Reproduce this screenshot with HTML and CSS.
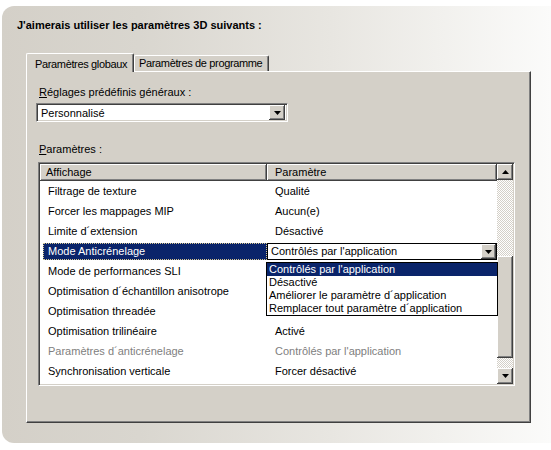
FILE: index.html
```html
<!DOCTYPE html>
<html lang="fr">
<head>
    <meta charset="UTF-8">
    <meta name="viewport" content="width=device-width, initial-scale=1.0">
    <title>Paramètres 3D</title>
    <link rel="stylesheet" href="styles.css">
</head>
<body>
    <div class="frame">
        <h1 class="title">J'aimerais utiliser les paramètres 3D suivants :</h1>

        <div class="tabs">
            <div class="tab-row">
                <div class="tab active">Paramètres globaux</div>
                <div class="tab">Paramètres de programme</div>
            </div>

            <div class="tab-panel">
                <div class="field-label preset-label"><u>R</u>églages prédéfinis généraux :</div>
                <div class="select preset">
                    <span class="select-text">Personnalisé</span>
                    <span class="btn drop-btn">
                        <svg width="7" height="4" viewBox="0 0 7 4"><polygon points="0,0 7,0 3.5,4" fill="#000"/></svg>
                    </span>
                </div>

                <div class="field-label list-label"><u>P</u>aramètres :</div>
                <div class="listview">
                    <div class="lv-main">
                        <div class="lv-header">
                            <div class="lv-col col-name">Affichage</div>
                            <div class="lv-col col-value">Paramètre</div>
                        </div>
                        <div class="lv-body">
                            <div class="lv-row"><div class="cell-name"><span>Filtrage de texture</span></div><div class="cell-value">Qualité</div></div>
                            <div class="lv-row"><div class="cell-name"><span>Forcer les mappages MIP</span></div><div class="cell-value">Aucun(e)</div></div>
                            <div class="lv-row"><div class="cell-name"><span>Limite d´extension</span></div><div class="cell-value">Désactivé</div></div>
                            <div class="lv-row selected">
                                <div class="cell-name"><span>Mode Anticrénelage</span></div>
                                <div class="cell-value">
                                    <div class="cell-combo">
                                        <span class="select-text">Contrôlés par l'application</span>
                                        <span class="btn combo-btn">
                                            <svg width="7" height="4" viewBox="0 0 7 4"><polygon points="0,0 7,0 3.5,4" fill="#000"/></svg>
                                        </span>
                                    </div>
                                </div>
                            </div>
                            <div class="lv-row"><div class="cell-name"><span>Mode de performances SLI</span></div><div class="cell-value"></div></div>
                            <div class="lv-row"><div class="cell-name"><span>Optimisation d´échantillon anisotrope</span></div><div class="cell-value"></div></div>
                            <div class="lv-row"><div class="cell-name"><span>Optimisation threadée</span></div><div class="cell-value"></div></div>
                            <div class="lv-row"><div class="cell-name"><span>Optimisation trilinéaire</span></div><div class="cell-value">Activé</div></div>
                            <div class="lv-row disabled"><div class="cell-name"><span>Paramètres d´anticrénelage</span></div><div class="cell-value">Contrôlés par l'application</div></div>
                            <div class="lv-row"><div class="cell-name"><span>Synchronisation verticale</span></div><div class="cell-value">Forcer désactivé</div></div>
                        </div>
                    </div>

                    <div class="vscroll">
                        <div class="btn scroll-btn">
                            <svg width="7" height="4" viewBox="0 0 7 4"><polygon points="3.5,0 7,4 0,4" fill="#000"/></svg>
                        </div>
                        <div class="scroll-track">
                            <div class="btn scroll-thumb"></div>
                        </div>
                        <div class="btn scroll-btn">
                            <svg width="7" height="4" viewBox="0 0 7 4"><polygon points="0,0 7,0 3.5,4" fill="#000"/></svg>
                        </div>
                    </div>

                    <!-- liste ouverte du combo de la ligne sélectionnée -->
                    <ul class="dropdown-list">
                        <li class="current">Contrôlés par l'application</li>
                        <li>Désactivé</li>
                        <li>Améliorer le paramètre d´application</li>
                        <li>Remplacer tout paramètre d´application</li>
                    </ul>
                </div>
            </div>
        </div>
    </div>
</body>
</html>
```

FILE: styles.css
```css
body {
    margin: 0;
    background: #ffffff;
    font-family: 'Liberation Sans', Arial, sans-serif;
    font-size: 11px;
    color: #000;
}
.frame {
    margin: 6px 0 0 2px;
    width: 549px;
    height: 437px;
    border-radius: 12px 0 0 12px;
    background: linear-gradient(to right, #d4d0c8 0%, #d9d6cf 25%, #e8e6e1 60%, #fbfbfa 100%);
    overflow: hidden;
}
.title {
    margin: 0;
    padding: 13px 0 0 15px;
    font-size: 11px;
    font-weight: bold;
    line-height: 13px;
}

/* Onglets */
.tabs {
    margin: 21px 0 0 24px;
    width: 505px;
}
.tab-row {
    display: flex;
    align-items: flex-end;
    height: 18px;
    position: relative;
    z-index: 1;
}
.tab {
    height: 15px;
    line-height: 14px;
    background: #d4d0c8;
    border-top: 1px solid #fff;
    border-left: 1px solid #fff;
    border-right: 1px solid #404040;
    box-shadow: inset -1px 0 #808080;
    border-radius: 2px 2px 0 0;
    padding-left: 4px;
    width: 129px;
    white-space: nowrap;
    letter-spacing: -0.35px;
    overflow: hidden;
}
.tab.active {
    height: 18px;
    line-height: 20px;
    margin-bottom: -1px;
    width: 98px;
    padding-left: 8px;
}
.tab-panel {
    height: 350px;
    background: #d4d0c8;
    border-top: 1px solid #fff;
    border-left: 1px solid #fff;
    border-right: 1px solid #404040;
    border-bottom: 1px solid #404040;
    box-shadow: inset -1px -1px #808080;
    overflow: hidden;
}
.field-label {
    line-height: 13px;
    margin-left: 12px;
}
.preset-label {
    margin-top: 14px;
}
.list-label {
    margin-top: 21px;
}

/* Boutons en relief */
.btn {
    display: flex;
    align-items: center;
    justify-content: center;
    background: #d4d0c8;
    box-shadow: inset -1px -1px #404040, inset 1px 1px #fff, inset -2px -2px #808080, inset 2px 2px #d4d0c8;
    box-sizing: border-box;
}

/* Liste déroulante des préréglages */
.select {
    display: flex;
    align-items: center;
    box-sizing: border-box;
    background: #fff;
    border-top: 1px solid #808080;
    border-left: 1px solid #808080;
    border-right: 1px solid #fff;
    border-bottom: 1px solid #fff;
    box-shadow: inset 1px 1px #404040, inset -1px -1px #d4d0c8;
}
.preset {
    margin: 4px 0 0 9px;
    width: 252px;
    height: 19px;
    padding: 0 2px 0 4px;
}
.select-text {
    flex: 1;
    white-space: nowrap;
}
.drop-btn {
    width: 16px;
    height: 15px;
}

/* Liste des paramètres */
.listview {
    position: relative;
    display: flex;
    margin: 6px 0 0 11px;
    width: 477px;
    height: 224px;
    box-sizing: border-box;
    background: #fff;
    border-top: 1px solid #808080;
    border-left: 1px solid #808080;
    border-right: 1px solid #fff;
    border-bottom: 1px solid #fff;
    box-shadow: inset 1px 1px #404040, inset -1px -1px #d4d0c8;
    padding: 1px;
}
.lv-main {
    width: 457px;
}
.lv-header {
    display: flex;
    height: 17px;
}
.lv-col {
    background: #d4d0c8;
    box-shadow: inset -1px -1px #404040, inset 1px 1px #fff, inset -2px -2px #808080;
    line-height: 17px;
    box-sizing: border-box;
}
.col-name {
    width: 227px;
    padding-left: 6px;
}
.col-value {
    width: 230px;
    padding-left: 8px;
}
.lv-row {
    display: flex;
    height: 20px;
    line-height: 20px;
}
.cell-name {
    width: 227px;
    padding-left: 3px;
    box-sizing: border-box;
    white-space: nowrap;
}
.cell-name span {
    display: block;
    padding-left: 5px;
}
.cell-value {
    width: 230px;
    padding-left: 8px;
    box-sizing: border-box;
    white-space: nowrap;
}
.lv-row.selected .cell-name span {
    margin-top: 2px;
    height: 17px;
    line-height: 17px;
    background: #0a246a;
    color: #fff;
    outline: 1px dotted #d8c890;
    outline-offset: -1px;
}
.lv-row.selected .cell-value {
    padding-left: 0;
}
.lv-row.disabled {
    color: #808080;
}
.cell-combo {
    display: flex;
    align-items: center;
    margin-top: 2px;
    height: 17px;
    box-sizing: border-box;
    border: 1px solid #000;
    background: #fff;
    padding: 0 0 0 3px;
    line-height: 15px;
}
.combo-btn {
    width: 15px;
    height: 15px;
}

/* Barre de défilement */
.vscroll {
    display: flex;
    flex-direction: column;
    width: 16px;
}
.scroll-btn {
    height: 16px;
}
.scroll-track {
    flex: 1;
    padding-top: 76px;
    background: repeating-conic-gradient(#d4d0c8 0 25%, #fff 0 50%) 0 0 / 2px 2px;
}
.scroll-thumb {
    height: 102px;
}

/* Menu ouvert */
.dropdown-list {
    position: absolute;
    left: 227px;
    top: 99px;
    width: 232px;
    margin: 0;
    padding: 0;
    list-style: none;
    background: #fff;
    border: 1px solid #000;
    box-sizing: border-box;
    z-index: 2;
}
.dropdown-list li {
    height: 13px;
    line-height: 13px;
    padding-left: 2px;
    white-space: nowrap;
}
.dropdown-list li.current {
    background: #0a246a;
    color: #fff;
}
```
